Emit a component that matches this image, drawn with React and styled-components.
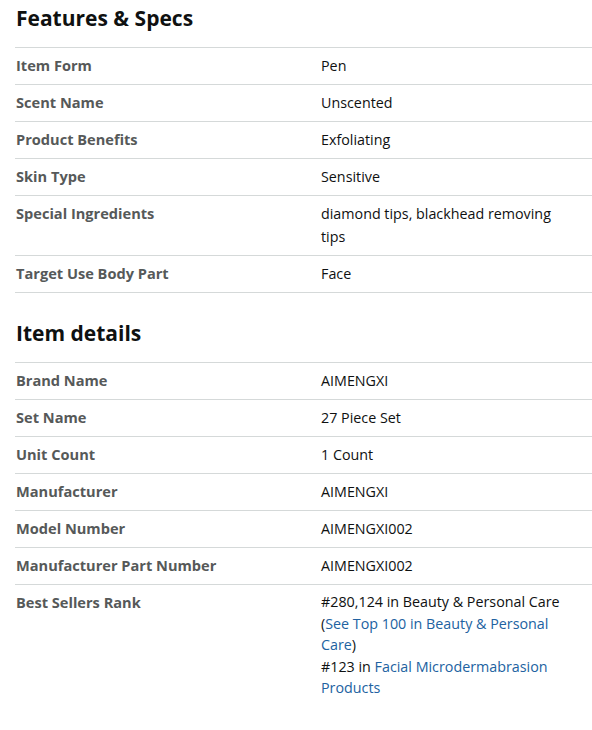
import styled, { createGlobalStyle } from "styled-components";

const GlobalStyle = createGlobalStyle`
  body {
    margin: 0;
    background: #fff;
    font-family: 'Open Sans', 'Noto Sans', sans-serif;
    color: #0f1111;
  }
`;

const features = [
  ["Item Form", "Pen"],
  ["Scent Name", "Unscented"],
  ["Product Benefits", "Exfoliating"],
  ["Skin Type", "Sensitive"],
  ["Special Ingredients", "diamond tips, blackhead removing tips"],
  ["Target Use Body Part", "Face"],
];

const details = [
  ["Brand Name", "AIMENGXI"],
  ["Set Name", "27 Piece Set"],
  ["Unit Count", "1 Count"],
  ["Manufacturer", "AIMENGXI"],
  ["Model Number", "AIMENGXI002"],
  ["Manufacturer Part Number", "AIMENGXI002"],
];

export default function App() {
  return (
    <Page>
      <GlobalStyle />
      <Section>
        <Heading>Features &amp; Specs</Heading>
        <SpecTable>
          {features.map(([k, v]) => (
            <Row key={k}>
              <Label>{k}</Label>
              <Value>{v}</Value>
            </Row>
          ))}
        </SpecTable>
      </Section>
      <Section $gap>
        <Heading>Item details</Heading>
        <SpecTable $open>
          {details.map(([k, v]) => (
            <Row key={k}>
              <Label>{k}</Label>
              <Value>{v}</Value>
            </Row>
          ))}
          <Row>
            <Label>Best Sellers Rank</Label>
            <Value $tight>
              #280,124 in Beauty &amp; Personal Care (
              <Link href="#">See Top 100 in Beauty &amp; Personal Care</Link>)
              <br />
              #123 in <Link href="#">Facial Microdermabrasion Products</Link>
            </Value>
          </Row>
        </SpecTable>
      </Section>
    </Page>
  );
}

const Page = styled.div`
  padding: 3px 0 0 15px;
`;

const Section = styled.section`
  margin-top: ${(p) => (p.$gap ? "25px" : "0")};
`;

const Heading = styled.h2`
  margin: 0 0 14px 1px;
  font-size: 21px;
  line-height: 30px;
  font-weight: 700;
  color: #0f1111;
`;

const SpecTable = styled.div`
  display: flex;
  flex-direction: column;
  border-bottom: ${(p) => (p.$open ? "none" : "1px solid #d5d9d9")};
`;

const Row = styled.div`
  display: grid;
  grid-template-columns: 305px 1fr;
  border-top: 1px solid #d5d9d9;
  padding: 6px 0 7px 1px;
`;

const Label = styled.div`
  font-size: 14.6px;
  line-height: 23px;
  font-weight: 700;
  color: #565959;
`;

const Value = styled.div`
  font-size: 14.3px;
  line-height: ${(p) => (p.$tight ? "21.6px" : "23px")};
  color: #0f1111;
  padding-right: 24px;
`;

const Link = styled.a`
  color: #2162a1;
  text-decoration: none;
`;
